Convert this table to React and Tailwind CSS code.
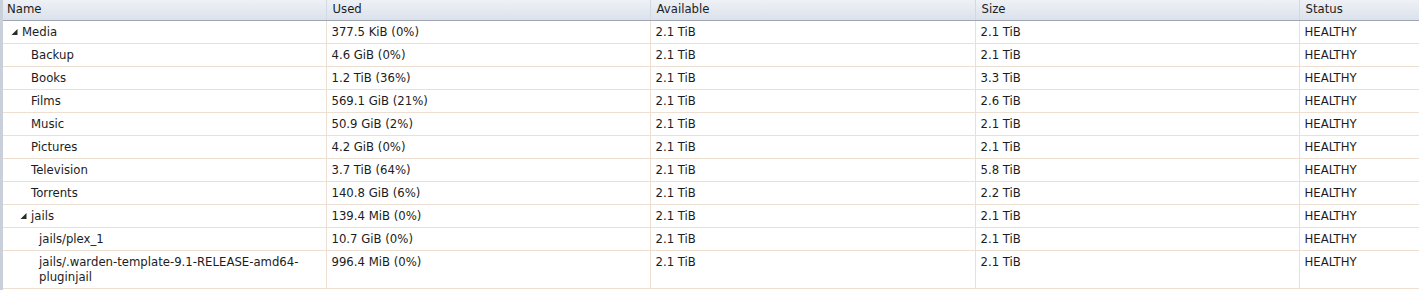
import React from "react";

const rows = [
	{ name: "Media", level: 0, open: true, used: "377.5 KiB (0%)", avail: "2.1 TiB", size: "2.1 TiB" },
	{ name: "Backup", level: 1, used: "4.6 GiB (0%)", avail: "2.1 TiB", size: "2.1 TiB" },
	{ name: "Books", level: 1, used: "1.2 TiB (36%)", avail: "2.1 TiB", size: "3.3 TiB" },
	{ name: "Films", level: 1, used: "569.1 GiB (21%)", avail: "2.1 TiB", size: "2.6 TiB" },
	{ name: "Music", level: 1, used: "50.9 GiB (2%)", avail: "2.1 TiB", size: "2.1 TiB" },
	{ name: "Pictures", level: 1, used: "4.2 GiB (0%)", avail: "2.1 TiB", size: "2.1 TiB" },
	{ name: "Television", level: 1, used: "3.7 TiB (64%)", avail: "2.1 TiB", size: "5.8 TiB" },
	{ name: "Torrents", level: 1, used: "140.8 GiB (6%)", avail: "2.1 TiB", size: "2.2 TiB" },
	{ name: "jails", level: 1, open: true, used: "139.4 MiB (0%)", avail: "2.1 TiB", size: "2.1 TiB" },
	{ name: "jails/plex_1", level: 2, used: "10.7 GiB (0%)", avail: "2.1 TiB", size: "2.1 TiB" },
	{
		name: "jails/.warden-template-9.1-RELEASE-amd64-pluginjail",
		level: 2,
		used: "996.4 MiB (0%)",
		avail: "2.1 TiB",
		size: "2.1 TiB",
	},
];

const indent = ["pl-[8px]", "pl-[17px]", "pl-[25px]"];

const Expander = ({ open }) =>
	open ? (
		<svg width="11" height="15" viewBox="0 0 11 15" className="block shrink-0">
			<path d="M0.5 10 L6.5 10 L6.5 4 Z" fill="#2b2b2b" />
		</svg>
	) : (
		<span className="block w-[11px] shrink-0" />
	);

const Header = ({ children, className = "" }) => (
	<th
		className={`h-[20px] border-b border-b-[#9fa6b2] border-r border-r-[#d3d9e2] px-[6px] text-left align-middle font-normal ${className}`}
	>
		{children}
	</th>
);

const Cell = ({ children, className = "" }) => (
	<td
		className={`border-b border-b-[#eddfd2] border-r border-r-[#eddfd2] px-[5px] pt-[4px] pb-[3px] align-top leading-[15px] ${className}`}
	>
		{children}
	</td>
);

export default function App() {
	return (
		<div
			className="h-[290px] w-[1419px] overflow-hidden border-l-[3px] border-l-[#c9d0da] bg-white text-[11.7px] text-[#1c1c24]"
			style={{ fontFamily: '"DejaVu Sans", Verdana, sans-serif' }}
		>
			<table className="w-full table-fixed border-collapse">
				<colgroup>
					<col className="w-[323px]" />
					<col className="w-[324px]" />
					<col className="w-[325px]" />
					<col className="w-[324px]" />
					<col />
				</colgroup>
				<thead>
					<tr className="bg-gradient-to-b from-[#eef1f6] to-[#dbe2ec]">
						<Header className="pl-[4px]">Name</Header>
						<Header>Used</Header>
						<Header>Available</Header>
						<Header>Size</Header>
						<Header className="border-r-0">Status</Header>
					</tr>
				</thead>
				<tbody>
					{rows.map((r) => (
						<tr key={r.name}>
							<td
								className={`border-b border-b-[#eddfd2] border-r border-r-[#eddfd2] pr-[5px] pt-[4px] pb-[3px] align-top leading-[15px] ${indent[r.level]}`}
							>
								<div className="flex items-start">
									<Expander open={r.open} />
									<span className="break-words">{r.name}</span>
								</div>
							</td>
							<Cell>{r.used}</Cell>
							<Cell>{r.avail}</Cell>
							<Cell>{r.size}</Cell>
							<Cell className="border-r-0">HEALTHY</Cell>
						</tr>
					))}
				</tbody>
			</table>
		</div>
	);
}
